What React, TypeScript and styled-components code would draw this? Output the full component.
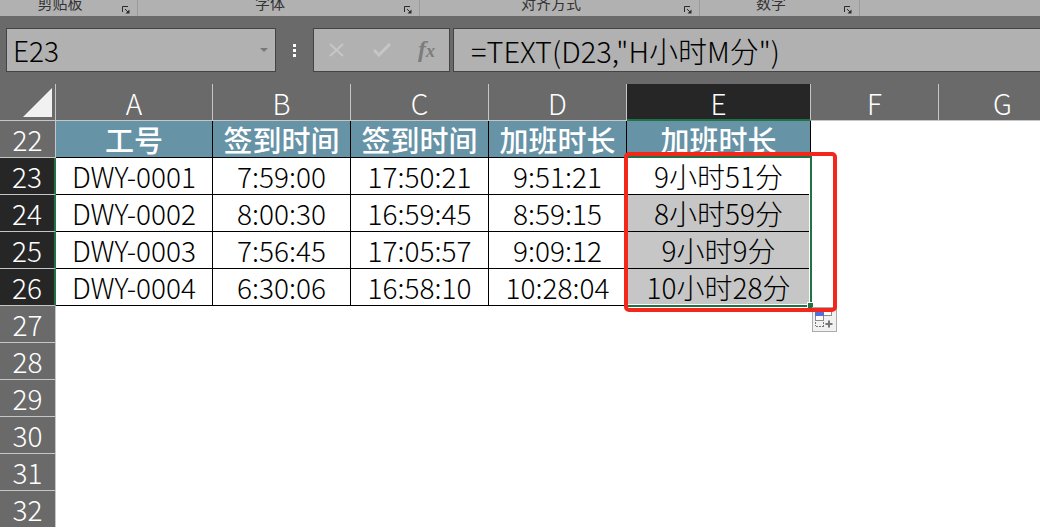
import React from "react";
import styled, { createGlobalStyle } from "styled-components";

const GlobalStyle = createGlobalStyle`
  * { box-sizing: border-box; }
  body {
    margin: 0;
    background: #ffffff;
    overflow: hidden;
  }
  body, button, input {
    font-family: "Noto Sans CJK SC", "Noto Sans", sans-serif;
    font-weight: 300;
  }
  button { padding: 0; border: 0; background: none; }
`;

const Window = styled.div`
  display: flex;
  flex-direction: column;
  height: 100vh;
  overflow: hidden;
`;

const Ribbon = styled.div`
  display: flex;
  flex: none;
  height: 16px;
  background: #b1b1b1;
  overflow: hidden;
`;

const RibbonGroup = styled.div<{ $width: number }>`
  display: flex;
  align-items: flex-end;
  flex: none;
  width: ${(p) => p.$width}px;
  border-right: 1px solid #9a9a9a;
  padding: 0 3px 0 2px;
`;

const GroupLabel = styled.span`
  flex: 1;
  text-align: center;
  font-size: 15px;
  font-weight: 400;
  line-height: 26px;
  color: #333333;
`;

const Launcher = styled.button`
  display: flex;
  width: 16px;
  height: 16px;
  align-items: center;
  justify-content: center;
  padding-top: 3px;
`;

const FormulaBar = styled.div`
  display: flex;
  flex: none;
  height: 68px;
  padding: 12px 0 12px 6px;
  background: #6a6a6a;
`;

const Box = styled.div`
  display: flex;
  align-items: center;
  height: 44px;
  background: #b1b1b1;
  border: 1px solid #444444;
`;

const NameBox = styled(Box)`
  width: 270px;
`;

const Actions = styled(Box)`
  width: 137px;
  margin-right: 3px;
`;

const FormulaBox = styled(Box)`
  flex: 1;
  border-right: 0;
`;

const TextInput = styled.input<{ $indent: number; $size: number }>`
  flex: 1;
  min-width: 0;
  height: 40px;
  padding: 0 0 0 ${(p) => p.$indent}px;
  border: 0;
  outline: 0;
  background: transparent;
  color: #000000;
  font-size: ${(p) => p.$size}px;
`;

const DropButton = styled.button`
  display: flex;
  align-items: center;
  justify-content: center;
  width: 22px;
  height: 40px;
`;

const Grip = styled.div`
  display: flex;
  flex-direction: column;
  align-items: center;
  justify-content: center;
  gap: 2px;
  width: 37px;
`;

const Dot = styled.span`
  width: 3px;
  height: 3px;
  background: #ffffff;
`;

const ActionButton = styled.button`
  display: flex;
  flex: 1;
  align-items: center;
  justify-content: center;
  height: 40px;
`;

const Fx = styled.span`
  font-family: "Liberation Serif", serif;
  font-style: italic;
  font-weight: 700;
  font-size: 24px;
  line-height: 32px;
  color: #7c7c7c;
`;

const FxSmall = styled.span`
  font-size: 18px;
`;

const Sheet = styled.main`
  flex: 1;
  min-height: 0;
  overflow: hidden;
`;

const Grid = styled.table`
  table-layout: fixed;
  width: 1067px;
  border-collapse: separate;
  border-spacing: 0;
  font-size: 28px;
  line-height: 36px;
`;

const Col = styled.col<{ $width: number }>`
  width: ${(p) => p.$width}px;
`;

const HeadCell = styled.th<{ $active?: boolean }>`
  height: 37px;
  padding: 2px 0 0;
  font-weight: 300;
  line-height: 32px;
  color: #ffffff;
  background: ${(p) => (p.$active ? "#262626" : "#6a6a6a")};
  border-right: 1px solid #c6c6c6;
  border-bottom: ${(p) => (p.$active ? "2px solid #217346" : "1px solid #c6c6c6")};
`;

const Corner = styled.td`
  padding: 0;
  background: #6a6a6a;
  border-right: 1px solid #c6c6c6;
  border-bottom: 1px solid #c6c6c6;
`;

const SelectAll = styled.button`
  display: flex;
  align-items: flex-end;
  justify-content: flex-end;
  width: 100%;
  height: 36px;
  padding: 0 3px 3px 0;
`;

const RowHead = styled.th<{ $active?: boolean }>`
  height: 37px;
  padding: 0;
  font-weight: 300;
  color: #ffffff;
  background: ${(p) => (p.$active ? "#262626" : "#6a6a6a")};
  border-right: ${(p) => (p.$active ? "2px solid #217346" : "1px solid #c6c6c6")};
  border-bottom: 1px solid #c6c6c6;
`;

const Cell = styled.td<{ $kind: "title" | "data" | "picked" | "empty" }>`
  position: relative;
  height: 37px;
  padding: 0;
  text-align: center;
  white-space: nowrap;
  color: ${(p) => (p.$kind === "title" ? "#ffffff" : "#000000")};
  font-size: ${(p) => (p.$kind === "title" ? 29 : 28)}px;
  font-weight: ${(p) => (p.$kind === "title" ? 500 : 300)};
  background: ${(p) =>
    p.$kind === "title" ? "#6793a7" : p.$kind === "picked" ? "#c6c6c6" : "#ffffff"};
  border: 0 solid #000000;
  border-width: ${(p) => (p.$kind === "empty" ? "0" : "0 1px 1px 0")};
`;

const Selection = styled.div`
  position: absolute;
  z-index: 1;
  top: -2px;
  left: -2px;
  width: 187px;
  height: 151px;
  border: 2px solid #217346;
  box-shadow: inset 0 0 0 1px #ffffff;
  pointer-events: none;
`;

const FillHandle = styled.span`
  position: absolute;
  right: -4px;
  bottom: -4px;
  width: 7px;
  height: 7px;
  background: #217346;
  border: 1px solid #ffffff;
`;

const FillOptions = styled.button`
  display: flex;
  position: absolute;
  z-index: 2;
  top: 149px;
  left: 185px;
  width: 25px;
  height: 25px;
  background: #f1f1f1;
  border: 1px solid #ababab;
`;

const Callout = styled.div`
  position: absolute;
  z-index: 3;
  top: -6px;
  left: -3px;
  width: 213px;
  height: 160px;
  border: 4px solid #f2281c;
  border-radius: 5px;
  pointer-events: none;
`;

const groups = [
  { label: "剪贴板", width: 138 },
  { label: "字体", width: 282 },
  { label: "对齐方式", width: 280 },
  { label: "数字", width: 160 },
];

const columns = [
  { name: "A", width: 157 },
  { name: "B", width: 138 },
  { name: "C", width: 138 },
  { name: "D", width: 138 },
  { name: "E", width: 184 },
  { name: "F", width: 128 },
  { name: "G", width: 128 },
];

const rows: { n: number; cells: string[] }[] = [
  { n: 22, cells: ["工号", "签到时间", "签到时间", "加班时长", "加班时长"] },
  { n: 23, cells: ["DWY-0001", "7:59:00", "17:50:21", "9:51:21", "9小时51分"] },
  { n: 24, cells: ["DWY-0002", "8:00:30", "16:59:45", "8:59:15", "8小时59分"] },
  { n: 25, cells: ["DWY-0003", "7:56:45", "17:05:57", "9:09:12", "9小时9分"] },
  { n: 26, cells: ["DWY-0004", "6:30:06", "16:58:10", "10:28:04", "10小时28分"] },
  { n: 27, cells: [] },
  { n: 28, cells: [] },
  { n: 29, cells: [] },
  { n: 30, cells: [] },
  { n: 31, cells: [] },
  { n: 32, cells: [] },
];

function kindOf(row: number, col: number, text?: string) {
  if (!text) return "empty";
  if (row === 22) return "title";
  return col === 4 && row > 23 ? "picked" : "data";
}

const LauncherIcon = () => (
  <svg width="8" height="8" viewBox="0 0 8 8" fill="none" stroke="#2b2b2b">
    <path d="M0.5 6V0.5H6M3 3l3.5 3.5" />
    <path d="M7.5 3.5v4h-4z" fill="#2b2b2b" stroke="none" />
  </svg>
);

const FillIcon = () => (
  <svg width="23" height="23" viewBox="0 0 23 23" fill="none">
    <rect x="10.5" y="2.5" width="8" height="5" fill="#fff" stroke="#8c8c8c" />
    <rect x="2.5" y="7.5" width="8" height="5" fill="#fff" stroke="#8c8c8c" />
    <rect x="2.5" y="2.5" width="8" height="5" fill="#4f6fe8" stroke="#5b6fc0" />
    <path d="M2.5 14v4M10.5 14v4M3 18.5h8" stroke="#777" strokeDasharray="2 1" />
    <path d="M16 12.5v7M12.500 16h7" stroke="#777" strokeWidth="2" />
  </svg>
);

export default function App() {
  return (
    <Window>
      <GlobalStyle />
      <Ribbon>
        {groups.map((g) => (
          <RibbonGroup key={g.label} $width={g.width}>
            <GroupLabel>{g.label}</GroupLabel>
            <Launcher aria-label={g.label}>
              <LauncherIcon />
            </Launcher>
          </RibbonGroup>
        ))}
      </Ribbon>
      <FormulaBar>
        <NameBox>
          <TextInput $indent={6} $size={28} aria-label="名称框" defaultValue="E23" />
          <DropButton aria-label="展开名称框">
            <svg width="8" height="4" viewBox="0 0 8 4">
              <path d="M0 0h8L4 4z" fill="#787878" />
            </svg>
          </DropButton>
        </NameBox>
        <Grip>
          <Dot />
          <Dot />
          <Dot />
        </Grip>
        <Actions>
          <ActionButton aria-label="取消">
            <svg width="15" height="14" viewBox="0 0 15 14" fill="none" stroke="#c6c6c6" strokeWidth="2">
              <path d="M1 1l13 12M14 1L1 13" />
            </svg>
          </ActionButton>
          <ActionButton aria-label="输入">
            <svg width="18" height="14" viewBox="0 0 18 14" fill="none" stroke="#c6c6c6" strokeWidth="3">
              <path d="M1 7l5 5L17 1" />
            </svg>
          </ActionButton>
          <ActionButton aria-label="插入函数">
            <Fx>
              f<FxSmall>x</FxSmall>
            </Fx>
          </ActionButton>
        </Actions>
        <FormulaBox>
          <TextInput $indent={17} $size={29} aria-label="编辑栏" defaultValue={'=TEXT(D23,"H小时M分")'} />
        </FormulaBox>
      </FormulaBar>
      <Sheet>
        <Grid>
          <colgroup>
            <Col $width={56} />
            {columns.map((c) => (
              <Col key={c.name} $width={c.width} />
            ))}
          </colgroup>
          <thead>
            <tr>
              <Corner>
                <SelectAll aria-label="全选">
                  <svg width="29" height="29" viewBox="0 0 29 29">
                    <path d="M29 0v29H0z" fill="#f1f1f1" />
                  </svg>
                </SelectAll>
              </Corner>
              {columns.map((c) => (
                <HeadCell key={c.name} scope="col" $active={c.name === "E"}>
                  {c.name}
                </HeadCell>
              ))}
            </tr>
          </thead>
          <tbody>
            {rows.map((r) => (
              <tr key={r.n}>
                <RowHead scope="row" $active={r.n > 22 && r.n < 27}>
                  {r.n}
                </RowHead>
                {columns.map((c, i) => (
                  <Cell key={c.name} $kind={kindOf(r.n, i, r.cells[i])}>
                    {r.cells[i]}
                    {r.n === 23 && c.name === "E" && (
                      <>
                        <Selection>
                          <FillHandle />
                        </Selection>
                        <FillOptions aria-label="自动填充选项">
                          <FillIcon />
                        </FillOptions>
                        <Callout />
                      </>
                    )}
                  </Cell>
                ))}
              </tr>
            ))}
          </tbody>
        </Grid>
      </Sheet>
    </Window>
  );
}
